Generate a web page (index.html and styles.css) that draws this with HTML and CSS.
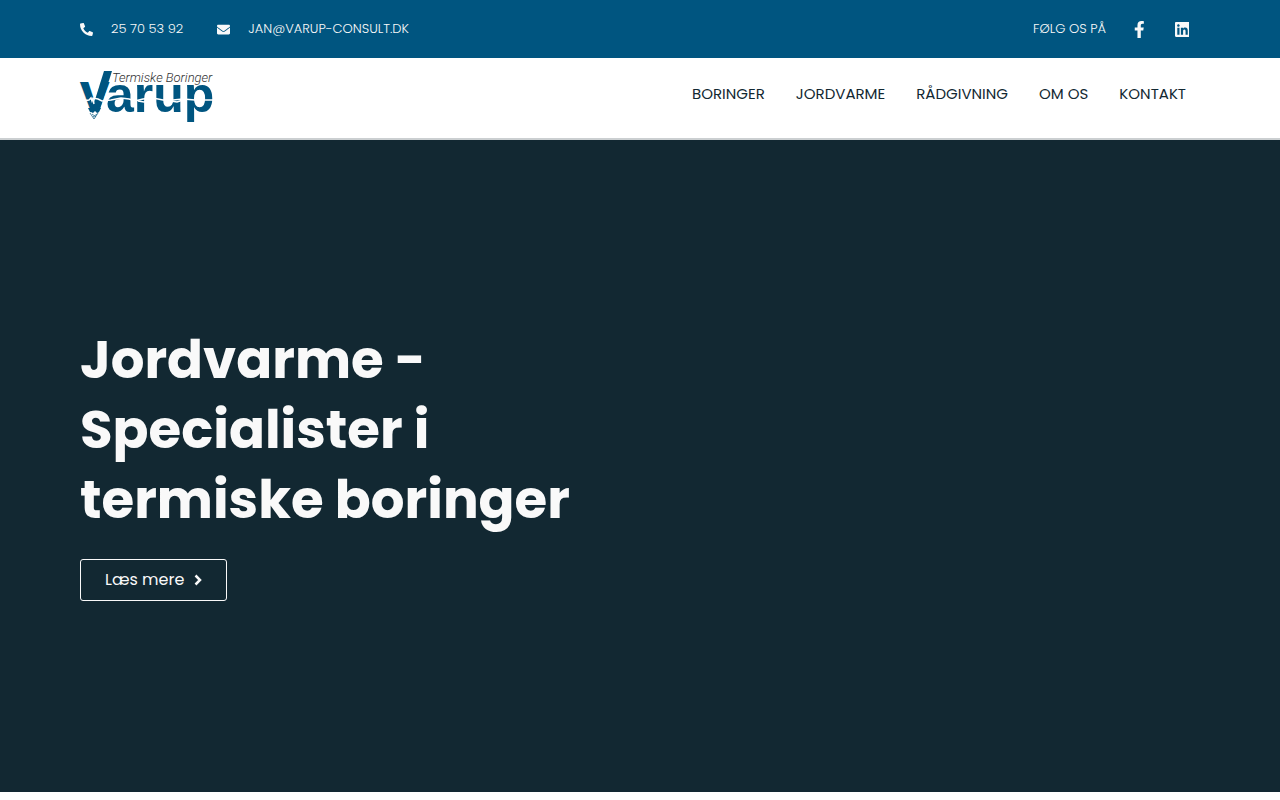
FILE: index.html
```
<!DOCTYPE html>
<html lang="da">
<head>
    <meta charset="UTF-8">
    <meta name="viewport" content="width=device-width, initial-scale=1.0">
    <title>Varup - Termiske Boringer</title>
    <link rel="stylesheet" href="styles.css">
</head>
<body>
    <div class="topbar">
        <div class="container">
            <div class="contact">
                <a href="tel:25705392">
                    <svg class="icon" viewBox="0 0 512 512"><path d="M493.400 24.600l-104-24c-11.300-2.600-22.900 3.300-27.500 13.900l-48 112c-4.200 9.800-1.400 21.300 6.900 28l60.600 49.600c-36 76.700-98.900 140.500-177.200 177.200l-49.600-60.600c-6.800-8.300-18.200-11.100-28-6.900l-112 48C3.900 366.500-2 378.100.6 389.400l24 104C27.100 504.200 36.700 512 48 512c256.100 0 464-207.500 464-464 0-11.200-7.700-20.900-18.600-23.400z" transform="matrix(-1 0 0 1 512 0)"/></svg>
                    <span>25 70 53 92</span>
                </a>
                <a href="mailto:jan@varup-consult.dk">
                    <svg class="icon" viewBox="0 0 512 512"><path d="M502.300 190.800c3.900-3.100 9.700-.2 9.700 4.700V400c0 26.500-21.500 48-48 48H48c-26.500 0-48-21.500-48-48V195.600c0-5 5.700-7.800 9.700-4.700 22.400 17.400 52.100 39.500 154.100 113.600 21.100 15.400 56.700 47.800 92.200 47.600 35.700.3 72-32.800 92.300-47.600 102-74.100 131.600-96.300 154-113.700zM256 320c23.200.4 56.600-29.200 73.400-41.400 132.700-96.300 142.800-104.700 173.400-128.700 5.800-4.500 9.200-11.500 9.200-18.900v-19c0-26.500-21.500-48-48-48H48c-26.500 0-48 21.500-48 48v19c0 7.400 3.400 14.300 9.200 18.900 30.600 23.900 40.700 32.400 173.400 128.700 16.800 12.200 50.200 41.800 73.400 41.400z"/></svg>
                    <span>JAN@VARUP-CONSULT.DK</span>
                </a>
            </div>
            <div class="social">
                <span>FØLG OS PÅ</span>
                <a href="#" aria-label="Facebook">
                    <svg viewBox="0 0 320 512"><path d="M279.140 288l14.220-92.660h-88.910v-60.130c0-25.350 12.420-50.060 52.240-50.060h40.420V6.260S260.430 0 225.360 0c-73.220 0-121.080 44.380-121.080 124.720v70.620H22.890V288h81.390v224h100.170V288z"/></svg>
                </a>
                <a href="#" aria-label="LinkedIn">
                    <svg viewBox="0 0 448 512"><path d="M416 32H31.900C14.300 32 0 46.500 0 64.300v383.400C0 465.500 14.300 480 31.900 480H416c17.600 0 32-14.500 32-32.300V64.300c0-17.800-14.400-32.300-32-32.300zM135.400 416H69V202.200h66.500V416zm-33.200-243c-21.300 0-38.500-17.300-38.500-38.500S80.900 96 102.200 96c21.200 0 38.500 17.300 38.500 38.500 0 21.300-17.200 38.500-38.500 38.500zm282.100 243h-66.400V312c0-24.800-.5-56.700-34.500-56.700-34.600 0-39.900 27-39.900 54.900V416h-66.400V202.200h63.700v29.200h.9c8.900-16.800 30.600-34.500 62.900-34.500 67.200 0 79.700 44.300 79.700 101.900V416z"/></svg>
                </a>
            </div>
        </div>
    </div>
    <header>
        <div class="container">
            <a class="logo" href="#" aria-label="Varup Termiske Boringer">
                <svg viewBox="0 0 134 56">
                    <text class="logo-tag" x="32" y="12">Termiske Boringer</text>
                    <text class="logo-v" x="1" y="41">V</text>
                    <!-- drill shaft and tip -->
                    <path class="logo-blue" d="M24 1h8l-12 38h-7l2-9z"/>
                    <path class="logo-blue" d="M8 38h13l-3 6h-7z"/>
                    <path class="logo-white" d="M8 43l3-1 2 1 2-2 2 2 3-1v3H8z"/>
                    <path class="logo-drill" d="M10 43l4 6 4-6M12 44l4 3M17 44l-4 3"/>
                    <text class="logo-name" x="26" y="42">arup</text>
                    <!-- ground line -->
                    <path class="logo-wave" d="M1 31l8-1 2-2 1 3 1-3 5 1 4 2 9-1 10-2 8 1 6 2 8-2 10-1 10 2 10 0 10-1 12 1h29"/>
                    <path class="logo-crack" d="M13 29l1 5M58 31l6 1 5-2M91 31l6 1 6-2"/>
                </svg>
            </a>
            <nav>
                <a href="#">BORINGER</a>
                <a href="#">JORDVARME</a>
                <a href="#">RÅDGIVNING</a>
                <a href="#">OM OS</a>
                <a href="#">KONTAKT</a>
            </nav>
        </div>
    </header>
    <main class="hero">
        <div class="container">
            <h1>Jordvarme -<br>Specialister i<br>termiske boringer</h1>
            <a class="btn" href="#">
                <span>Læs mere</span>
                <svg viewBox="0 0 8 12"><path d="M1.500 1.500L6 6l-4.500 4.500"/></svg>
            </a>
        </div>
    </main>
</body>
</html>
```
FILE: styles.css
```
* {
    box-sizing: border-box;
}
body {
    margin: 0;
    background: #fff;
    font-family: Poppins, Inter, sans-serif;
}
a {
    color: inherit;
    text-decoration: none;
}
.container {
    width: 100%;
    max-width: 1160px;
    margin: 0 auto;
    padding: 0 20px;
}
.topbar {
    background: #005580;
    color: #f9f9f9;
    font-size: 13px;
    font-weight: 300;
    line-height: 20px;
    padding: 19px 0;
}
.topbar .container,
header .container {
    display: flex;
    justify-content: space-between;
    align-items: center;
}
.contact {
    display: flex;
    gap: 34px;
}
.contact a {
    display: flex;
    align-items: center;
    gap: 18px;
}
.icon {
    width: 13px;
    height: 13px;
    fill: #f9f9f9;
}
.social {
    display: flex;
    align-items: center;
    gap: 7px;
}
.social span {
    margin-right: 8px;
}
.social a {
    display: flex;
    justify-content: center;
    width: 36px;
}
.social svg {
    height: 17px;
    fill: #f9f9f9;
}
header {
    border-bottom: 2px solid #cbcfd1;
}
header .container {
    align-items: flex-start;
    padding: 12px 20px;
}
.logo svg {
    display: block;
    width: 134px;
    height: 56px;
    overflow: visible;
}
.logo-tag {
    font: italic 300 13px Roboto, sans-serif;
    fill: #333;
}
.logo-v {
    font: bold 41px "Liberation Sans", sans-serif;
    stroke: #005580;
    stroke-width: 2;
}
.logo-name {
    font: bold 50px "Liberation Sans", sans-serif;
}
.logo-v, .logo-name, .logo-blue {
    fill: #005580;
}
.logo-white {
    fill: #fff;
}
.logo-drill {
    fill: none;
    stroke: #005580;
    stroke-width: 0.7;
}
.logo-wave, .logo-crack {
    fill: none;
    stroke: #fff;
    stroke-width: 1.5;
}
nav {
    display: flex;
    gap: 31px;
    padding: 14px 14px 0 0;
    color: #122832;
    font-size: 15px;
    line-height: 20px;
}
nav a:hover {
    color: #005580;
}
.hero {
    display: flex;
    align-items: center;
    min-height: calc(100vh - 148px);
    padding-bottom: 6px;
    background: #122832;
    color: #f9f9f9;
}
h1 {
    margin: 0 0 24px;
    font-size: 53px;
    font-weight: 700;
    line-height: 70px;
}
.btn {
    display: inline-flex;
    align-items: center;
    gap: 10px;
    padding: 10px 24px;
    border: 1px solid #f9f9f9;
    border-radius: 3px;
    font-size: 16px;
    line-height: 20px;
}
.btn svg {
    width: 8px;
    height: 12px;
    fill: none;
    stroke: #f9f9f9;
    stroke-width: 2.5;
}
```
